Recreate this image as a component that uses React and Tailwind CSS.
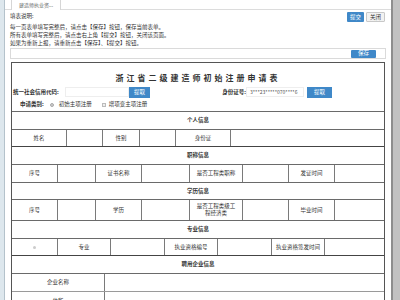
import React from 'react';

const font = { fontFamily: '"Noto Sans CJK SC", "Noto Sans", sans-serif' };

function Cell({ w, children, last, className = '' }) {
    return (
        <div
            className={
                'flex items-center justify-center text-center leading-[7px] ' +
                (last ? '' : 'border-r border-[#7a7a7a] ') +
                className
            }
            style={{ width: w }}
        >
            {children}
        </div>
    );
}

function Header({ title, h = 'h-[18px]' }) {
    return (
        <div className={'flex items-center justify-center border-b border-[#6a6a6a] font-bold ' + h}>
            {title}
        </div>
    );
}

function BlueBtn({ children, className = '' }) {
    return (
        <div className={'flex items-center justify-center bg-[#3f88c8] text-white ' + className}>
            {children}
        </div>
    );
}

export default function App() {
    return (
        <div className="flex w-[400px] h-[300px] overflow-hidden bg-white text-[#333]" style={font}>
            {/* left strip */}
            <div className="w-[5px] shrink-0 bg-[#dde7ed] border-r border-[#b4c2cb]" />

            {/* main */}
            <div className="flex-1 flex flex-col min-w-0">
                {/* tab strip */}
                <div className="h-[10px] shrink-0 flex border-b border-[#dcdcdc]">
                    <div className="ml-[6px] w-[50px] h-[10px] border-x border-[#d6d6d6] bg-white text-[5px] text-[#666] flex items-center justify-center -mb-px">
                        建造师执业资...
                    </div>
                </div>

                <div className="px-[5px] text-[5.5px]">
                    {/* notes + buttons */}
                    <div className="flex justify-between">
                        <div className="pt-[2px]">
                            <div className="leading-[8px]">填表说明:</div>
                            <div className="mt-[3px] leading-[8px]">
                                <div>每一页表单填写完整后，请点击【保存】按钮，保存当前表单。</div>
                                <div>所有表单填写完整后，请点击右上角【提交】按钮，关闭该页面。</div>
                                <div>如果为重新上报，请重新点击【保存】、【提交】按钮。</div>
                            </div>
                        </div>
                        <div className="flex gap-[2px] pt-[2px] pr-px">
                            <BlueBtn className="w-[17px] h-[10px] rounded-[1px]">提交</BlueBtn>
                            <div className="w-[19px] h-[10px] flex items-center justify-center bg-[#f2f2f2] border border-[#c8c8c8] rounded-[1px]">
                                关闭
                            </div>
                        </div>
                    </div>

                    {/* save bar */}
                    <div className="mt-[1px] h-[11px] border border-[#dadada] flex items-center justify-end pr-[9px]">
                        <BlueBtn className="w-[25px] h-[8px] rounded-[1px]">保存</BlueBtn>
                    </div>

                    {/* form box */}
                    <div className="mt-[3px] mx-[1px] border border-[#555] border-b-0">
                        <div className="h-[22px] flex items-end justify-center pb-[1px] text-[8px] font-bold tracking-[3px] text-[#333]">
                            浙江省二级建造师初始注册申请表
                        </div>
                        <div className="h-[14px] flex items-center">
                            <span className="font-bold ml-[1px] w-[52px]">统一社会信用代码:</span>
                            <div className="w-[64px] h-[10px] border border-[#eeeeee]" />
                            <BlueBtn className="w-[21px] h-[11px]">提取</BlueBtn>
                            <div className="flex-1" />
                            <span className="font-bold">身份证号:</span>
                            <div className="w-[58px] h-[10px] border border-[#eeeeee] flex items-center pl-[3px] text-[5px] text-[#555]">
                                3***23*****070****6
                            </div>
                            <BlueBtn className="ml-[3px] w-[25px] h-[11px] mr-[52px]">提取</BlueBtn>
                        </div>
                        <div className="h-[12px] flex items-center pb-[1px]">
                            <span className="font-bold ml-[8px]">申请类别:</span>
                            <span className="ml-[6px] w-[4px] h-[4px] rounded-full border border-[#aaa] bg-[#ccc]" />
                            <span className="ml-[5px]">初始主项注册</span>
                            <span className="ml-[10px] w-[4px] h-[4px] border border-[#bbb] bg-[#eee]" />
                            <span className="ml-[3px]">增项变主项注册</span>
                        </div>

                        {/* table */}
                        <div className="border-t border-[#6a6a6a]">
                            <Header title="个人信息" />
                            <div className="flex h-[17px] border-b-[1.5px] border-[#444]">
                                <Cell w={55}>姓名</Cell>
                                <Cell w={36} />
                                <Cell w={37}>性别</Cell>
                                <Cell w={36} />
                                <Cell w={55}>身份证</Cell>
                                <Cell w={148} last />
                            </div>
                            <Header title="职称信息" />
                            <div className="flex h-[18px] border-b border-[#6a6a6a]">
                                <Cell w={46}>序号</Cell>
                                <Cell w={38} />
                                <Cell w={46}>证书名称</Cell>
                                <Cell w={48} />
                                <Cell w={53}>是否工程类职称</Cell>
                                <Cell w={46} />
                                <Cell w={46}>发证时间</Cell>
                                <Cell w={45} last />
                            </div>
                            <Header title="学历信息" h="h-[17px]" />
                            <div className="flex h-[21px] border-b border-[#6a6a6a]">
                                <Cell w={46}>序号</Cell>
                                <Cell w={38} />
                                <Cell w={46}>学历</Cell>
                                <Cell w={48} />
                                <Cell w={53} className="px-[6px]">是否工程类级工程经济类</Cell>
                                <Cell w={46} />
                                <Cell w={46}>毕业时间</Cell>
                                <Cell w={45} last />
                            </div>
                            <Header title="专业信息" />
                            <div className="flex h-[17px] border-b-[1.5px] border-[#444]">
                                <Cell w={46}>
                                    <span className="w-[3px] h-[3px] rounded-full bg-[#ccc]" />
                                </Cell>
                                <Cell w={53}>专业</Cell>
                                <Cell w={54} />
                                <Cell w={53}>执业资格编号</Cell>
                                <Cell w={54} />
                                <Cell w={53}>执业资格签发时间</Cell>
                                <Cell w={55} last />
                            </div>
                            <Header title="聘用企业信息" />
                            <div className="flex h-[18px] border-b border-[#9a9a9a]">
                                <Cell w={93}>企业名称</Cell>
                                <Cell w={275} last />
                            </div>
                            <div className="flex h-[18px]">
                                <Cell w={93}>住所</Cell>
                                <Cell w={275} last />
                            </div>
                        </div>
                    </div>
                </div>
            </div>

            {/* right bar */}
            <div className="w-[9px] shrink-0 bg-[#c2c2c2] border-l-2 border-[#8e8e8e]" />
        </div>
    );
}
